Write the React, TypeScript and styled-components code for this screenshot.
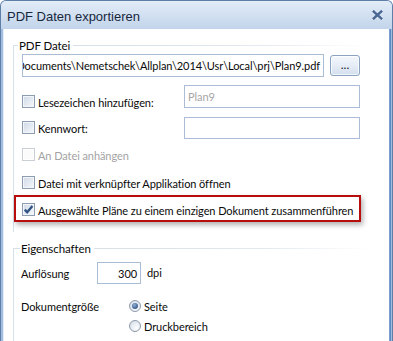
import React from 'react';
import styled, { createGlobalStyle } from 'styled-components';

const GlobalStyle = createGlobalStyle`
  html, body { margin: 0; padding: 0; background: #ffffff; }
  body { font-family: Lato, "Liberation Sans", Arial, sans-serif; font-size: 11px; letter-spacing: -0.08px; color: #0a0a0a; }
`;

const Window = styled.div`
  width: 393px;
  height: 341px;
  box-sizing: border-box;
  display: flex;
  flex-direction: column;
  border: 1px solid #5f7fa9;
  border-bottom: none;
  border-radius: 6px 6px 0 0;
  background: #a3bde0;
  overflow: hidden;
`;

const TitleBar = styled.div`
  height: 28px;
  flex-shrink: 0;
  display: flex;
  align-items: center;
  justify-content: space-between;
  padding: 0 9px 0 6px;
  background: linear-gradient(180deg, #e3ecf8 0%, #d2e0f1 50%, #c2d4eb 100%);
`;

const Title = styled.span`
  font-family: "Liberation Sans", Arial, sans-serif;
  font-size: 13px;
  letter-spacing: 0;
  color: #17283d;
  padding-top: 2px;
`;

const Body = styled.div`
  flex: 1;
  display: flex;
  flex-direction: column;
  margin: 0 3px 0 2px;
  padding: 16px 0 0 9px;
  background: #ffffff;
  border-left: 1px solid #e6eef8;
  box-shadow: 1px 0 0 #7b9fd0, 2px 0 0 #5f88c2;
`;

const GroupBox = styled.div<{ $fill?: boolean; $pb?: number; $mt?: number }>`
  display: flex;
  flex-direction: column;
  border-left: 1px solid #d7dfe7;
  padding: 0 0 ${p => p.$pb ?? 0}px 7px;
  margin: ${p => p.$mt ?? 0}px 18px 0 0;
  flex: ${p => (p.$fill ? 1 : 'none')};
`;

const Legend = styled.div<{ $lead: number }>`
  display: flex;
  align-items: center;
  height: 14px;
  margin: -7px 0 0 -8px;
  font-size: 11.5px;

  &::before {
    content: '';
    width: ${p => p.$lead}px;
    height: 1px;
    background: #d7dfe7;
  }

  span { padding: 0 3px 0 1px; }

  &::after {
    content: '';
    flex: 1;
    height: 1px;
    background: linear-gradient(90deg, #d7dfe7 0%, #e1e8ef 60%, rgba(255, 255, 255, 0) 100%);
  }
`;

const PathRow = styled.div`
  display: flex;
  align-items: center;
  gap: 6px;
  margin: 2px 0 0 1px;
`;

const PathInput = styled.div`
  width: 302px;
  height: 23px;
  box-sizing: border-box;
  border: 1px solid #abbdd4;
  display: flex;
  align-items: center;
  justify-content: flex-end;
  overflow: hidden;
  padding-right: 3px;
  white-space: nowrap;

  span { flex-shrink: 0; }
`;

const BrowseButton = styled.button`
  width: 30px;
  height: 21px;
  box-sizing: border-box;
  border: 1px solid #8ba2c1;
  border-radius: 3px;
  background: linear-gradient(180deg, #f4f8fc 0%, #e6edf6 50%, #d3dfee 100%);
  font: 12px Lato, "Liberation Sans", Arial, sans-serif;
  color: #1c1c1c;
  padding: 0 0 2px;
  line-height: 17px;
  box-shadow: inset 0 0 0 1px rgba(255, 255, 255, 0.7);
`;

const FieldRow = styled.div<{ $mt: number }>`
  display: grid;
  grid-template-columns: 163px 176px;
  align-items: start;
  margin-top: ${p => p.$mt}px;
`;

const CheckItem = styled.label<{ $mt?: number; $disabled?: boolean }>`
  display: flex;
  align-items: center;
  gap: 3px;
  height: 13px;
  margin: ${p => p.$mt ?? 0}px 0 0 1px;
  line-height: 13px;
  color: ${p => (p.$disabled ? '#a3a3a3' : 'inherit')};
  white-space: nowrap;

  span.text { padding-top: 2px; }
`;

const Box = styled.span<{ $disabled?: boolean }>`
  width: 13px;
  height: 13px;
  flex-shrink: 0;
  box-sizing: border-box;
  display: flex;
  align-items: center;
  justify-content: center;
  border: 1px solid ${p => (p.$disabled ? '#c9cfd6' : '#8e9cb0')};
  background: ${p =>
    p.$disabled
      ? '#fbfbfb'
      : 'linear-gradient(135deg, #cfd9e5 0%, #e4eaf2 55%, #f7f9fc 100%)'};
  box-shadow: inset 0 0 0 1px ${p => (p.$disabled ? '#ffffff' : '#f2f5f9')};
`;

const TextBox = styled.div<{ $h: number; $placeholder?: boolean }>`
  height: ${p => p.$h}px;
  box-sizing: border-box;
  border: 1px solid #abbdd6;
  display: flex;
  align-items: center;
  padding-left: 3px;
  color: ${p => (p.$placeholder ? '#a6a6a6' : 'inherit')};
`;

const Highlight = styled.div`
  width: 347px;
  box-sizing: border-box;
  margin: 6px 0 0 -7px;
  padding: 6px 0 4px 5px;
  border: 2px solid #b80d0d;
  box-shadow: 2px 3px 5px rgba(0, 0, 0, 0.3);
`;

const PropRow = styled.div<{ $mt: number }>`
  display: flex;
  align-items: flex-start;
  margin-top: ${p => p.$mt}px;
`;

const PropLabel = styled.span<{ $w: number; $h: number }>`
  width: ${p => p.$w}px;
  height: ${p => p.$h}px;
  line-height: ${p => p.$h}px;
  flex-shrink: 0;
  padding-top: 1px;
  box-sizing: border-box;
`;

const NumberInput = styled.div`
  width: 44px;
  height: 22px;
  box-sizing: border-box;
  border: 1px solid #a9bdd6;
  display: flex;
  align-items: center;
  justify-content: flex-end;
  padding-right: 3px;
`;

const Unit = styled.span`
  margin-left: 6px;
  line-height: 22px;
`;

const RadioList = styled.div`
  display: flex;
  flex-direction: column;
  gap: 8px;
`;

const RadioItem = styled.label`
  display: flex;
  align-items: center;
  gap: 3px;
  height: 12px;
  line-height: 12px;

  span.text { padding-top: 2px; }
`;

const RadioDot = styled.span<{ $checked?: boolean }>`
  position: relative;
  width: 12px;
  height: 12px;
  flex-shrink: 0;
  box-sizing: border-box;
  border-radius: 50%;
  border: 1px solid #8d99ab;
  background: radial-gradient(circle at 65% 70%, #fbfcfe 0%, #e6ebf2 55%, #cdd6e2 100%);

  &::after {
    content: '';
    display: ${p => (p.$checked ? 'block' : 'none')};
    position: absolute;
    inset: 2px;
    border-radius: 50%;
    background: radial-gradient(circle at 40% 35%, #8fb0d8 0%, #4b6c98 55%, #2a466e 100%);
  }
`;

const CloseIcon = () => (
  <svg width="11" height="10" viewBox="0 0 11 10">
    <path d="M1.5 1.5 L9.5 8.5 M9.5 1.5 L1.5 8.5" stroke="#e9f0f8" strokeWidth="4" strokeLinecap="round" />
    <path d="M1.8 1.6 L9.2 8.4 M9.2 1.6 L1.8 8.4" stroke="#4a6a95" strokeWidth="2.6" strokeLinecap="square" />
  </svg>
);

const CheckMark = () => (
  <svg width="11" height="11" viewBox="0 0 11 11">
    <polyline points="1.8,5.6 4.2,8.2 9.4,2" fill="none" stroke="#2f5283" strokeWidth="2.3" />
  </svg>
);

const Check: React.FC<{ label: string; checked?: boolean; disabled?: boolean; mt?: number }> = ({
  label,
  checked,
  disabled,
  mt,
}) => (
  <CheckItem $mt={mt} $disabled={disabled}>
    <Box $disabled={disabled}>{checked && <CheckMark />}</Box>
    <span className="text">{label}</span>
  </CheckItem>
);

export default function App() {
  return (
    <>
      <GlobalStyle />
      <Window>
        <TitleBar>
          <Title>PDF Daten exportieren</Title>
          <CloseIcon />
        </TitleBar>
        <Body>
          <GroupBox $pb={10}>
            <Legend $lead={5}>
              <span>PDF Datei</span>
            </Legend>
            <PathRow>
              <PathInput>
                <span>{'C:\\Users\\Public\\Documents\\Nemetschek\\Allplan\\2014\\Usr\\Local\\prj\\Plan9.pdf'}</span>
              </PathInput>
              <BrowseButton>...</BrowseButton>
            </PathRow>
            <FieldRow $mt={8}>
              <Check label="Lesezeichen hinzufügen:" mt={10} />
              <TextBox $h={23} $placeholder>Plan9</TextBox>
            </FieldRow>
            <FieldRow $mt={9}>
              <Check label="Kennwort:" mt={4} />
              <TextBox $h={22} />
            </FieldRow>
            <FieldRow $mt={9}>
              <Check label="An Datei anhängen" disabled />
            </FieldRow>
            <FieldRow $mt={15}>
              <Check label="Datei mit verknüpfter Applikation öffnen" />
            </FieldRow>
            <Highlight>
              <Check label="Ausgewählte Pläne zu einem einzigen Dokument zusammenführen" checked />
            </Highlight>
          </GroupBox>
          <GroupBox $fill $mt={16}>
            <Legend $lead={7}>
              <span>Eigenschaften</span>
            </Legend>
            <PropRow $mt={7}>
              <PropLabel $w={76} $h={22}>Auflösung</PropLabel>
              <NumberInput>300</NumberInput>
              <Unit>dpi</Unit>
            </PropRow>
            <PropRow $mt={16}>
              <PropLabel $w={108} $h={12}>Dokumentgröße</PropLabel>
              <RadioList>
                <RadioItem>
                  <RadioDot $checked />
                  <span className="text">Seite</span>
                </RadioItem>
                <RadioItem>
                  <RadioDot />
                  <span className="text">Druckbereich</span>
                </RadioItem>
              </RadioList>
            </PropRow>
          </GroupBox>
        </Body>
      </Window>
    </>
  );
}
